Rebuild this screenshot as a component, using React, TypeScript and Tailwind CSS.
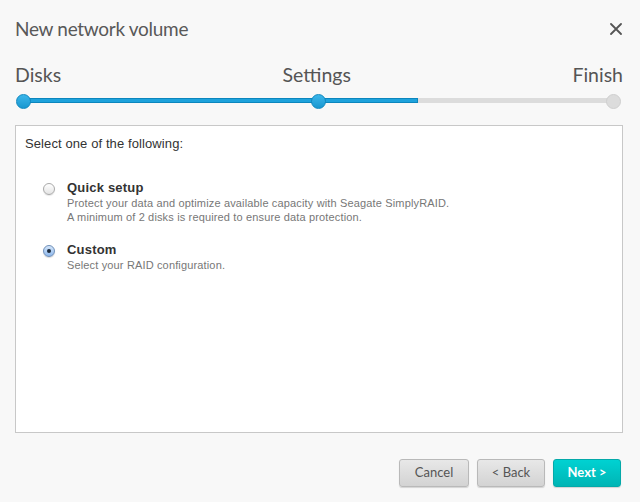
import { useState } from 'react';

const STEPS = ['Disks', 'Settings', 'Finish'];

const OPTIONS = [
  {
    id: 'quick',
    title: 'Quick setup',
    lines: [
      'Protect your data and optimize available capacity with Seagate SimplyRAID.',
      'A minimum of 2 disks is required to ensure data protection.',
    ],
  },
  {
    id: 'custom',
    title: 'Custom',
    lines: ['Select your RAID configuration.'],
  },
];

function Radio({ checked }: { checked: boolean }) {
  return checked ? (
    <span className="flex h-[12px] w-[12px] shrink-0 items-center justify-center rounded-full border border-[#6f8fb8] bg-gradient-to-b from-[#d4e6fa] to-[#8fb8ec] shadow-[0_1px_1px_rgba(0,0,0,0.15)]">
      <span className="block h-[4px] w-[4px] rounded-full bg-[#1c2a3c]" />
    </span>
  ) : (
    <span className="block h-[12px] w-[12px] shrink-0 rounded-full border border-[#a9a9a9] bg-gradient-to-b from-[#ffffff] to-[#e4e4e4] shadow-[0_1px_1px_rgba(0,0,0,0.1)]" />
  );
}

function Dot({ active }: { active: boolean }) {
  return active ? (
    <span className="block h-[15px] w-[15px] rounded-full border border-[#0f88bf] bg-gradient-to-b from-[#3ab6ea] to-[#1797d0]" />
  ) : (
    <span className="block h-[15px] w-[15px] rounded-full border border-[#cfcfcf] bg-[#dcdcdc]" />
  );
}

export default function App() {
  const [choice, setChoice] = useState('custom');

  return (
    <div className="h-[502px] w-[640px] overflow-hidden bg-[#f8f8f8] pl-[15px] pr-[17px] font-['Lato',sans-serif]">
      {/* Header */}
      <div className="flex items-center justify-between pt-[17px]">
        <h1 className="text-[19px] leading-[24px] font-normal tracking-[-0.3px] text-[#595959]">New network volume</h1>
        <button className="mr-[1px] text-[#555]">
          <svg width="12" height="12" viewBox="0 0 12 12" stroke="currentColor" strokeWidth="1.8" strokeLinecap="round">
            <path d="M1 1 L11 11 M11 1 L1 11" />
          </svg>
        </button>
      </div>

      {/* Steps */}
      <div className="mt-[22px] flex justify-between text-[19.5px] leading-[24px] text-[#555]">
        {STEPS.map((s) => (
          <span key={s}>{s}</span>
        ))}
      </div>
      <div className="relative mt-[7px] h-[15px] w-[606px]">
        <div className="absolute top-[4px] left-[8px] h-[5px] w-[590px] rounded-full bg-[#dcdcdc]" />
        <div className="absolute top-[4px] left-[8px] h-[5px] w-[395px] border border-[#0c86bd] bg-[#1ea2dc]" />
        <div className="absolute top-0 left-[1px]">
          <Dot active />
        </div>
        <div className="absolute top-0 left-[296px]">
          <Dot active />
        </div>
        <div className="absolute top-0 left-[591px]">
          <Dot active={false} />
        </div>
      </div>

      {/* Content */}
      <div className="mt-[16px] h-[308px] w-[608px] border border-[#c8c8c8] bg-white pt-[10px] pl-[9px] font-['Liberation_Sans',Arial,sans-serif]">
        <p className="text-[13px] leading-[16px] tracking-[0.1px] text-[#333]">Select one of the following:</p>
        <div className="mt-[28px] flex flex-col gap-[18px] pl-[18px]">
          {OPTIONS.map((o) => (
            <label key={o.id} className="flex cursor-pointer items-start" onClick={() => setChoice(o.id)}>
              <span className="mt-[3px] block">
                <Radio checked={choice === o.id} />
              </span>
              <span className="ml-[12px] flex flex-col">
                <span className="text-[13px] leading-[16px] font-bold tracking-[0.2px] text-[#333]">{o.title}</span>
                {o.lines.map((l) => (
                  <span key={l} className="text-[11px] leading-[14px] tracking-[0.15px] text-[#777]">
                    {l}
                  </span>
                ))}
              </span>
            </label>
          ))}
        </div>
      </div>

      {/* Footer */}
      <div className="mt-[26px] flex justify-end gap-2 pr-[2px] text-[13px]">
        <button className="h-[28px] w-[70px] rounded-[3px] border border-[#b9b9b9] bg-gradient-to-b from-[#e8e8e8] to-[#d3d3d3] text-[#555] shadow-[0_1px_1px_rgba(0,0,0,0.15)]">
          Cancel
        </button>
        <button className="h-[28px] w-[68px] rounded-[3px] border border-[#b9b9b9] bg-gradient-to-b from-[#e8e8e8] to-[#d3d3d3] text-[#555] shadow-[0_1px_1px_rgba(0,0,0,0.15)]">
          &lt; Back
        </button>
        <button className="h-[28px] w-[68px] rounded-[3px] border border-[#04a9a9] bg-gradient-to-b from-[#00d2d2] to-[#00b5b5] font-bold text-white shadow-[0_1px_1px_rgba(0,0,0,0.15)]">
          Next &gt;
        </button>
      </div>
    </div>
  );
}
